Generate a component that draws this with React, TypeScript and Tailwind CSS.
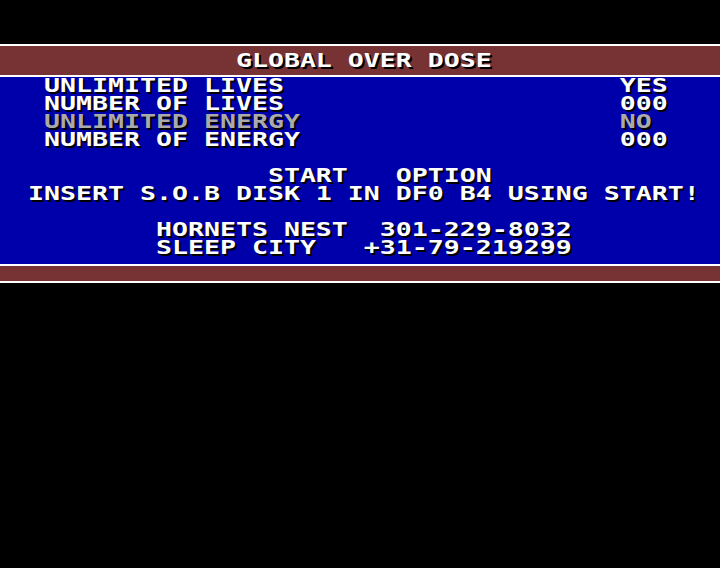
import React from "react";

const W = "text-white";
const G = "text-[#aaaaaa]";

type Seg = { t: string; c?: string };

const rows: Seg[][] = [
  [{ t: " UNLIMITED LIVES                     YES" }],
  [{ t: " NUMBER OF LIVES                     000" }],
  [{ t: " UNLIMITED ENERGY                    NO", c: G }],
  [{ t: " NUMBER OF ENERGY                    000" }],
  [{ t: " " }],
  [{ t: "               START   OPTION" }],
  [{ t: "INSERT S.O.B DISK 1 IN DF0 B4 USING START!" }],
  [{ t: " " }],
  [{ t: "        HORNETS NEST  301-229-8032" }],
  [{ t: "        SLEEP CITY   +31-79-219299" }],
];

function Line({ segs }: { segs: Seg[] }) {
  return (
    <div className="h-[18px] leading-[18px] whitespace-pre scale-x-[1.726] scale-y-[1.28] origin-left">
      {segs.map((s, i) => (
        <span key={i} className={s.c ?? W}>
          {s.t}
        </span>
      ))}
    </div>
  );
}

export default function App() {
  return (
    <div className="w-[720px] h-[568px] bg-black font-['DejaVu_Sans_Mono',monospace] font-bold text-[15.4px] [text-shadow:1.16px_1.56px_0_#000] overflow-hidden">
      <div className="h-[44px]" />
      {/* title bar */}
      <div className="h-[33px] border-y-2 border-white bg-[#773333] pl-[28px] pt-[6px]">
        <Line segs={[{ t: "             GLOBAL OVER DOSE" }]} />
      </div>
      {/* menu panel */}
      <div className="h-[187px] bg-[#0000aa] pl-[28px]">
        {rows.map((r, i) => (
          <Line key={i} segs={r} />
        ))}
      </div>
      <div className="h-[19px] border-y-2 border-white bg-[#773333]" />
    </div>
  );
}
